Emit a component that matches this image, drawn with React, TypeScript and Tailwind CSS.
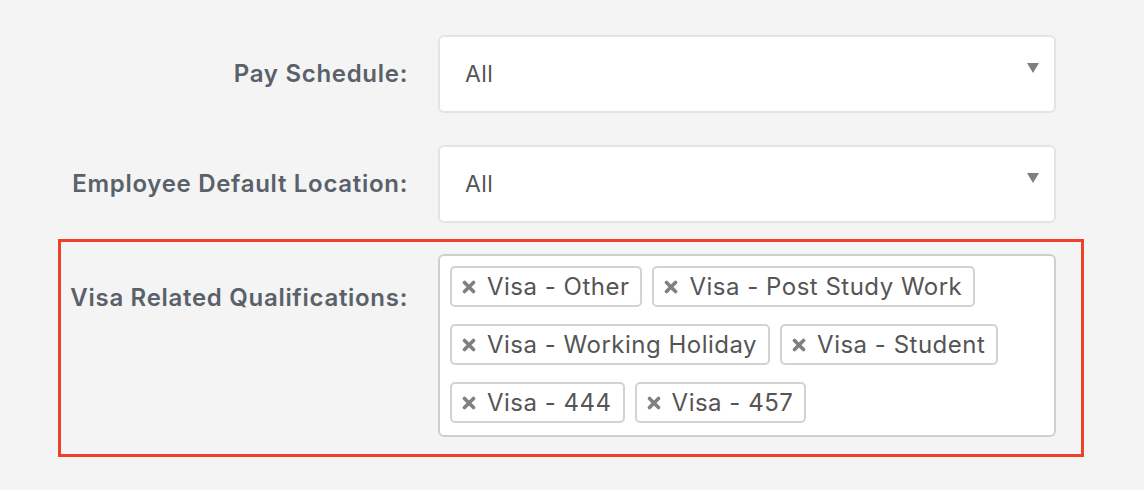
const TAGS = [
  ['Visa - Other', 'Visa - Post Study Work'],
  ['Visa - Working Holiday', 'Visa - Student'],
  ['Visa - 444', 'Visa - 457'],
];

const Caret = () => (
  <svg width="12" height="10" viewBox="0 0 12 10" className="absolute right-[15px] top-[26px]">
    <path d="M0 0 H12 L6 10 Z" fill="#808080" />
  </svg>
);

const Cross = () => (
  <svg width="14" height="14" viewBox="0 0 14 14" className="shrink-0">
    <path d="M2.5 2.5 L11.5 11.5 M11.5 2.5 L2.5 11.5" stroke="#808080" strokeWidth="3.6" strokeLinecap="round" />
  </svg>
);

const SelectBox = ({ value }: { value: string }) => (
  <div className="relative w-[618px] h-[78px] bg-white border-2 border-[#e0e4e8] rounded-[6px] flex items-center pl-[25px] text-[23px] tracking-[0.4px] text-[#555]">
    {value}
    <Caret />
  </div>
);

const Label = ({ text, className = '' }: { text: string; className?: string }) => (
  <div className={`w-[347px] text-right text-[24px] tracking-[0.7px] font-semibold text-[#59616a] ${className}`}>
    {text}
  </div>
);

export default function App() {
  return (
    <div className="w-[1144px] h-[490px] bg-[#f4f4f4] pt-[35px]" style={{ fontFamily: 'Inter, "Open Sans", sans-serif' }}>
      <div className="ml-[58px] w-[1026px]">
        {/* Pay schedule */}
        <div className="flex items-center pl-[3px]">
          <Label text="Pay Schedule:" />
          <div className="ml-[30px]">
            <SelectBox value="All" />
          </div>
        </div>

        {/* Default location */}
        <div className="flex items-center pl-[3px] mt-[32px]">
          <Label text="Employee Default Location:" />
          <div className="ml-[30px]">
            <SelectBox value="All" />
          </div>
        </div>

        {/* Visa qualifications — highlighted */}
        <div className="mt-[16px] border-[3px] border-[#ef4129] flex items-start pt-[12px] pb-[17px]">
          <Label text="Visa Related Qualifications:" className="pt-[26px]" />
          <div className="ml-[30px] w-[618px] bg-white border-2 border-[#cfcfcf] rounded-[6px] pl-[10px] pt-[10px] pb-[12px] flex flex-col gap-[17px]">
            {TAGS.map((row, i) => (
              <div key={i} className="flex gap-[10px]">
                {row.map((t) => (
                  <div
                    key={t}
                    className="h-[41px] flex items-center gap-[11px] pl-[10px] pr-[11px] border-2 border-[#d3d3d3] rounded-[5px] text-[24px] tracking-[0.5px] text-[#555]"
                  >
                    <Cross />
                    <span>{t}</span>
                  </div>
                ))}
              </div>
            ))}
          </div>
        </div>
      </div>
    </div>
  );
}
